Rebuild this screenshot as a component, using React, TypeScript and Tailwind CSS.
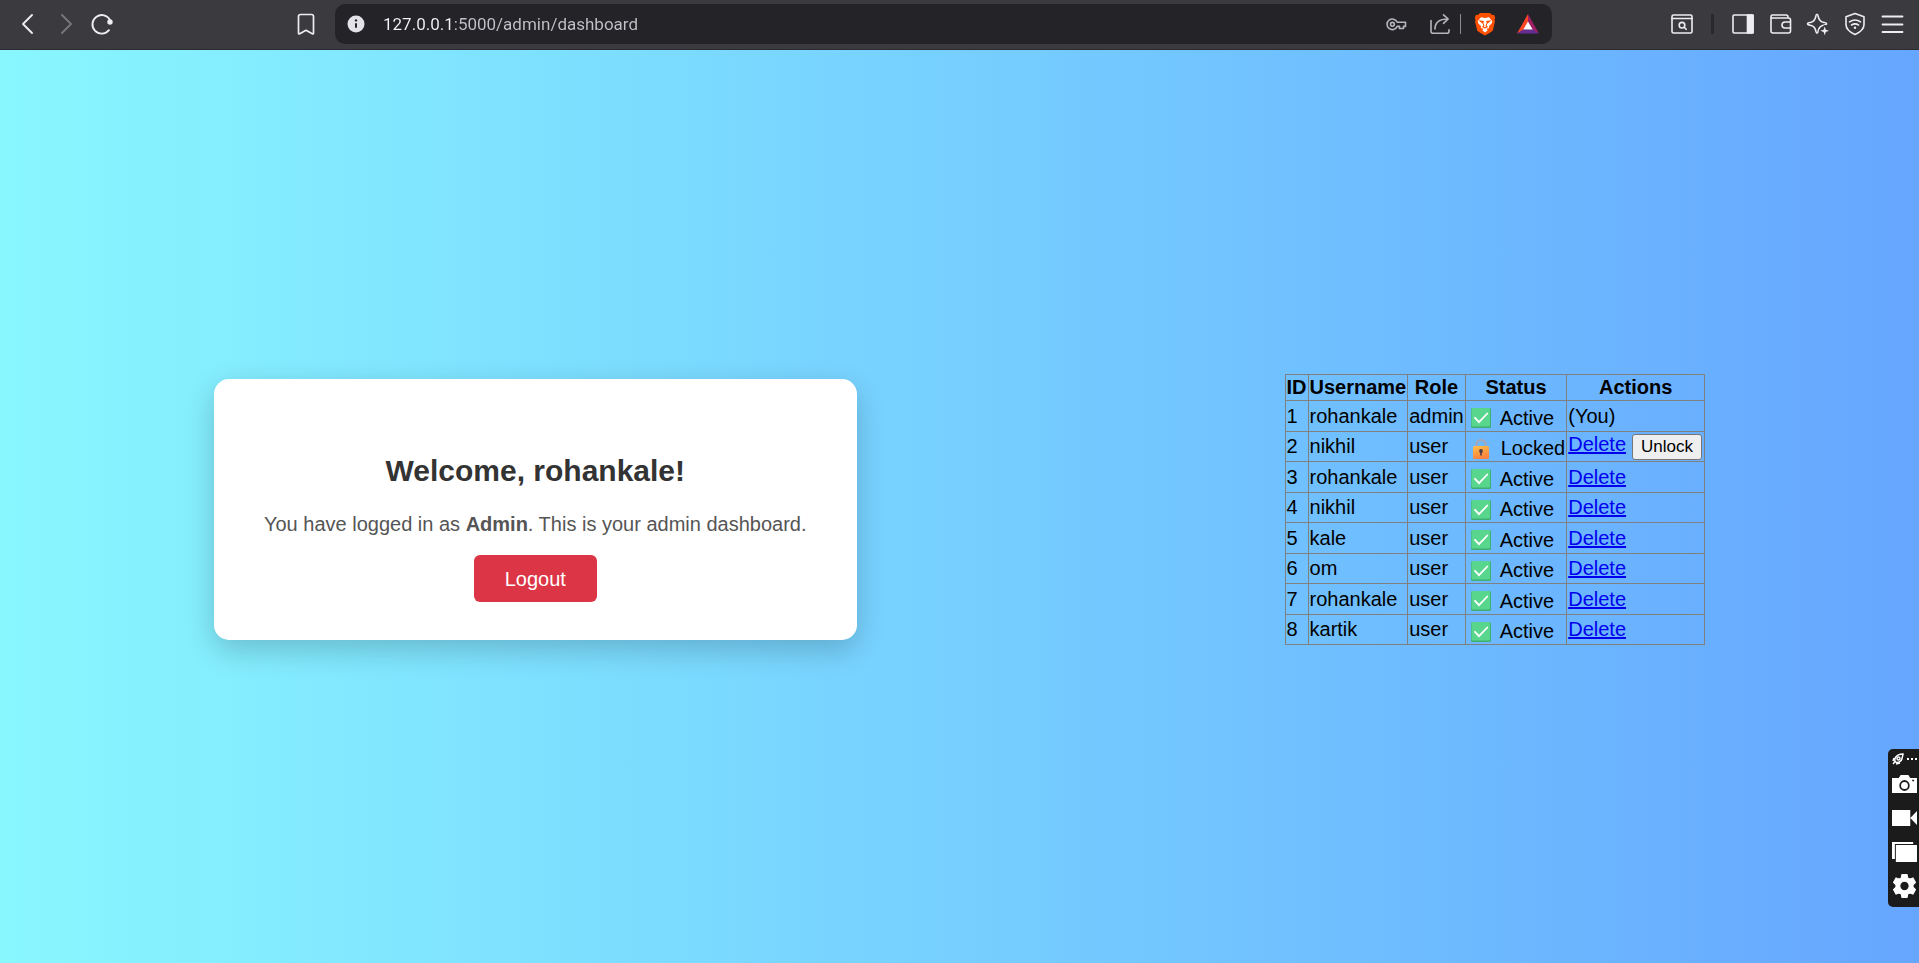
import React from "react";

type User = { id: number; name: string; role: string; locked?: boolean; self?: boolean };

const users: User[] = [
  { id: 1, name: "rohankale", role: "admin", self: true },
  { id: 2, name: "nikhil", role: "user", locked: true },
  { id: 3, name: "rohankale", role: "user" },
  { id: 4, name: "nikhil", role: "user" },
  { id: 5, name: "kale", role: "user" },
  { id: 6, name: "om", role: "user" },
  { id: 7, name: "rohankale", role: "user" },
  { id: 8, name: "kartik", role: "user" },
];

const line = {
  fill: "none",
  stroke: "currentColor",
  strokeWidth: 1.6,
  strokeLinecap: "round" as const,
  strokeLinejoin: "round" as const,
};

function IconButton({ label, className = "", children }: { label: string; className?: string; children: React.ReactNode }) {
  return (
    <button type="button" aria-label={label} className={`flex size-6 shrink-0 items-center justify-center ${className}`}>
      {children}
    </button>
  );
}

function BrowserBar() {
  return (
    <header className="flex h-[50px] shrink-0 items-center border-b border-[#2b2b2f] bg-[#3b3a3f] pb-px text-[#eeedf2]">
      <nav className="flex w-[335px] shrink-0 items-center justify-between pl-4 pr-[17px]">
        <div className="flex items-center gap-[13px]">
          <IconButton label="Back">
            <svg width="24" height="24" viewBox="0 0 24 24" {...line} strokeWidth={1.9}><path d="M16 3 7 12l9 9" /></svg>
          </IconButton>
          <IconButton label="Forward" className="text-[#77767b]">
            <svg width="24" height="24" viewBox="0 0 24 24" {...line} strokeWidth={1.9}><path d="m9 3 9 9-9 9" /></svg>
          </IconButton>
          <IconButton label="Reload">
            <svg width="24" height="24" viewBox="0 0 24 24" {...line} strokeWidth={1.9}>
              <path d="M20.1 8.2A9.3 9.3 0 1 0 19 18.2" />
              <circle cx="20" cy="10" r="2.7" fill="currentColor" stroke="none" />
            </svg>
          </IconButton>
        </div>
        <IconButton label="Bookmark">
          <svg width="24" height="24" viewBox="0 0 24 24" {...line} strokeWidth={1.7}>
            <path d="M6.500 2.500h11q2 0 2 2v16.500q0 1.300-1.200.7L12 18.300 5.700 21.700q-1.200.6-1.200-.7V4.500q0-2 2-2Z" />
          </svg>
        </IconButton>
      </nav>
      <div className="flex h-10 min-w-0 flex-1 items-center rounded-[10px] bg-[#242328] pl-[9px] pr-3">
        <IconButton label="Site information">
          <svg width="22" height="22" viewBox="0 0 22 22">
            <circle cx="11" cy="11" r="8.500" fill="#e4e2e9" />
            <path d="M11 10.200v4.500" stroke="#242328" strokeWidth="2" />
            <circle cx="11" cy="7.400" r="1.200" fill="#242328" />
          </svg>
        </IconButton>
        <input
          aria-label="Address"
          defaultValue="127.0.0.1:5000/admin/dashboard"
          className="ml-[15px] min-w-0 flex-1 bg-[linear-gradient(to_right,#f4f3f8_71px,#c3c2c8_71px)] bg-clip-text font-[Roboto,sans-serif] text-[17px] leading-6 text-transparent caret-white outline-none"
        />
        <div className="flex items-center text-[#b6b5bb]">
          <IconButton label="Passwords">
            <svg width="24" height="24" viewBox="0 0 24 24" {...line}>
              <path d="M12.200 10.200h8.300v4.200h-2v2.100h-4v-2.100h-2.300a5.300 5.300 0 1 1 0-4.200Z" />
              <circle cx="7.400" cy="12.300" r="1.900" />
            </svg>
          </IconButton>
          <IconButton label="Share" className="ml-[19px]">
            <svg width="24" height="24" viewBox="0 0 24 24" {...line}>
              <path d="M3 8.500v10.800q0 2 2 2h14q2 0 2-2v-1.500M7 17c0-6.500 4.500-10 13-10M15.500 2.800 20.200 7l-4.700 4.300" />
            </svg>
          </IconButton>
          <span className="ml-2 h-5 w-px bg-[#8b8a90]" />
          <IconButton label="Brave Shields" className="ml-3">
            <svg width="24" height="24" viewBox="0 0 24 24">
              <path d="M7 1h10l2 2 2-.2 1.200 2.600-.6 2.400.3 1.900-2.200 9Q17 21 12 23.500 7 21 4.300 18.700l-2.200-9 .3-1.900-.6-2.400L3 2.800 5 3Z" fill="#ff5000" />
              <path d="M8 5.200 12 6l4-.8 3.300 3.700-.7 2.500-2.700 2.800.3 1.700-2.300.8-.9-.8 1.700 2.300L12 20.500l-2.700-2.300 1.700-2.300-.9.800-2.300-.8.300-1.700-2.700-2.800-.7-2.500Z" fill="#fff" />
              <path d="m7.200 9 3.100.5-.6 1.600ZM16.800 9l-3.100.5.6 1.600ZM10.300 11.500l.5 2.300-1 1 2.200 1 2.200-1-1-1 .5-2.300" fill="none" stroke="#ff5000" strokeWidth="1.100" />
            </svg>
          </IconButton>
          <IconButton label="Brave Rewards" className="ml-[19px]">
            <svg width="24" height="24" viewBox="0 0 24 24">
              <path d="M12 2 1 21.500l6.500-3.500L12 10Z" fill="#ff4724" />
              <path d="m12 2 11 19.500-6.500-3.500L12 10Z" fill="#9e1f63" />
              <path d="M1 21.500h22l-6.500-4.300h-9Z" fill="#662d91" />
              <path d="m12 9.500-4.700 8h9.400Z" fill="#fff" />
            </svg>
          </IconButton>
        </div>
      </div>
      <div className="flex w-[367px] shrink-0 items-center justify-end pr-[15px]">
        <IconButton label="Search tabs">
          <svg width="24" height="24" viewBox="0 0 24 24" {...line}>
            <rect x="2" y="3" width="20" height="18" rx="1.500" /><path d="M2 6.500h20" />
            <circle cx="12" cy="13.200" r="2.800" /><path d="m14.200 15.300 2 2" />
          </svg>
        </IconButton>
        <span className="ml-[17px] h-5 w-[3px] bg-[#29282d]" />
        <IconButton label="Side panel" className="ml-[17px]">
          <svg width="24" height="24" viewBox="0 0 24 24" {...line}>
            <rect x="2" y="3" width="20" height="18" rx="1.200" /><path d="M16.500 3H22v18h-5.500Z" fill="currentColor" />
          </svg>
        </IconButton>
        <IconButton label="Wallet" className="ml-[14px]">
          <svg width="24" height="24" viewBox="0 0 24 24" {...line}>
            <path d="M2 5v14q0 2 2 2h15.500q2 0 2-2V8q0-2-2-2H3.500Q2 6 2 4.500T3.500 3H17q2 0 2 2v1M21.800 10H16q-3 0-3 3v0q0 3 3 3h5.800" />
          </svg>
        </IconButton>
        <IconButton label="Leo AI" className="ml-[13px]">
          <svg width="24" height="24" viewBox="0 0 24 24" {...line}>
            <path d="M11 2.300c1 0 1 1 1.300 2.500C13 8.300 14.500 9.700 18 10.500c1.600.3 2.600.4 2.600 1.300S19 13 17.500 13.300c-3 .7-4.500 2-5.200 5.200-.3 1.600-.4 2.600-1.300 2.600s-1-1-1.300-2.600c-.7-3.500-2-4.500-5.500-5.200-1.600-.3-2.700-.6-2.700-1.500s1.100-1 2.700-1.300C7.700 9.700 9 8.300 9.700 4.800 10 3.300 10 2.300 11 2.300Z" />
            <path d="m18.700 14.500 1.100 3.200 3.200 1.100-3.200 1.100-1.100 3.300-1.100-3.300-3.300-1.100 3.300-1.100Z" fill="currentColor" stroke="#3b3a3f" strokeWidth="3" paintOrder="stroke" />
          </svg>
        </IconButton>
        <IconButton label="VPN" className="ml-[13px]">
          <svg width="24" height="24" viewBox="0 0 24 24" {...line}>
            <path d="m12 1.500 9 3.200v7.800c0 4.500-4.500 8-9 10-4.500-2-9-5.500-9-10V4.700Z" />
            <path d="M6.500 9.800Q12 6.200 17.500 9.800M8.500 13q3.500-2.300 7 0" />
            <circle cx="12" cy="15.800" r="1.200" fill="currentColor" stroke="none" />
          </svg>
        </IconButton>
        <IconButton label="Menu" className="ml-[13px]">
          <svg width="24" height="24" viewBox="0 0 24 24" {...line} strokeWidth={1.8}><path d="M2.500 4.500h20M2.500 12.500h20M2.500 20h20" /></svg>
        </IconButton>
      </div>
    </header>
  );
}

function CheckMark() {
  return (
    <svg className="mt-1 shrink-0" width="20" height="20" viewBox="0 0 20 20" role="img" aria-label="Active account">
      <rect width="20" height="20" rx="1.500" fill="#3fae70" />
      <rect x="0.500" y="0" width="18.500" height="18.500" rx="1" fill="#59d68d" />
      <path d="m4 9.800 4 4.400L16.300 5.500" fill="none" stroke="#fff" strokeWidth="1.800" strokeLinecap="round" />
    </svg>
  );
}

function Padlock() {
  return (
    <svg className="mt-1 shrink-0" width="20" height="20" viewBox="0 0 20 20" role="img" aria-label="Locked account">
      <defs>
        <linearGradient id="padlock-body" x1="0" y1="0" x2="0.300" y2="1">
          <stop stopColor="#ffc04a" /><stop offset="1" stopColor="#f9823f" />
        </linearGradient>
      </defs>
      <path d="M5.500 9V5.500a4.500 4.500 0 0 1 9 0V9" fill="none" stroke="#a9a5b5" strokeWidth="2" />
      <rect x="2" y="7" width="16" height="13" rx="1.500" fill="url(#padlock-body)" />
      <circle cx="10" cy="12" r="1.900" fill="#4a3a45" />
      <path d="M9.200 12h1.600v4.500H9.200Z" fill="#4a3a45" />
    </svg>
  );
}

function UsersTable() {
  const cell = "border border-[#808080] px-px py-px text-left";
  const head = "border border-[#808080] px-px py-px text-center font-bold";
  return (
    <table className="border-collapse text-[20px] leading-[23px] text-black">
      <thead>
        <tr className="h-[26px]">
          <th className={head}>ID</th>
          <th className={head}>Username</th>
          <th className={head}>Role</th>
          <th className={head}>Status</th>
          <th className={head}>Actions</th>
        </tr>
      </thead>
      <tbody>
        {users.map((u) => (
          <tr key={u.id} className="odd:h-[31px] even:h-[30px]">
            <td className={cell}>{u.id}</td>
            <td className={cell}>{u.name}</td>
            <td className={cell}>{u.role}</td>
            <td className={cell}>
              <div className="flex h-[26px] items-center pl-1">
                {u.locked ? <Padlock /> : <CheckMark />}
                <span className={u.locked ? "ml-[10px] mt-1" : "ml-[9px] mt-1"}>{u.locked ? "Locked" : "Active"}</span>
              </div>
            </td>
            <td className={cell}>
              {u.self ? (
                "(You)"
              ) : u.locked ? (
                <div className="flex h-[26px] items-center pr-px">
                  <a href="#delete" className="-mt-1 text-[#0000ee] underline">Delete</a>
                  <button type="button" className="ml-[6px] h-[26px] rounded-[3px] border border-[#767676] bg-[#efefef] px-2 text-[17px] leading-5">
                    Unlock
                  </button>
                </div>
              ) : (
                <a href="#delete" className="text-[#0000ee] underline">Delete</a>
              )}
            </td>
          </tr>
        ))}
      </tbody>
    </table>
  );
}

function CaptureToolbar() {
  return (
    <aside aria-label="Screen capture" className="absolute right-0 top-[749px] flex w-[31px] flex-col items-start rounded-l-[5px] bg-[#1b1b1b] pb-2 pl-1 text-white">
      <div className="flex h-5 items-center gap-[3px]">
        <svg width="12" height="12" viewBox="0 0 12 12" fill="none" stroke="currentColor" strokeWidth="1.500">
          <path d="M1 11 3 8.500M11 1C8 1 5 2 3.500 4.500S3 9.500 5 9.500 9.500 8 10 5.500 11 2 11 1ZM2 5 1 8M8 10l-4 1" /><circle cx="6.500" cy="5.500" r="1.500" />
        </svg>
        <svg width="10" height="4" viewBox="0 0 10 4" fill="currentColor"><path d="M0 1h2v2H0ZM4 1h2v2H4ZM8 1h2v2H8Z" /></svg>
      </div>
      <button type="button" aria-label="Take screenshot" className="mt-[5px]">
        <svg width="25" height="20" viewBox="0 0 26 20" preserveAspectRatio="none">
          <path d="M0 4h7l2-3h8l2 3h7v15H0Z" fill="currentColor" />
          <circle cx="13" cy="11.500" r="4.500" fill="none" stroke="#1b1b1b" strokeWidth="1.800" />
          <path d="M21 6.500h2" stroke="#1b1b1b" strokeWidth="1.500" />
        </svg>
      </button>
      <button type="button" aria-label="Record video" className="mt-[14px]">
        <svg width="25" height="20" viewBox="0 0 26 20" preserveAspectRatio="none" fill="currentColor"><path d="M0 2h19v16H0ZM19 10l7-7v14Z" /></svg>
      </button>
      <button type="button" aria-label="Gallery" className="mt-[13px]">
        <svg width="25" height="22" viewBox="0 0 26 22" preserveAspectRatio="none" fill="currentColor"><path d="M0 1h22v2H3v15H0Z" /><path d="M4 4h22v17H4Z" /></svg>
      </button>
      <button type="button" aria-label="Settings" className="mt-[10px]">
        <svg width="25" height="26" viewBox="0 0 24 24" fill="currentColor">
          <path fillRule="evenodd" stroke="currentColor" strokeLinejoin="round" d="m9.500 1-.6 3.200-2 1.100-3-1.100-2.500 4.400L3.800 10.800v2.400l-2.400 2.200 2.500 4.400 3-1.100 2 1.100.6 3.200h5l.6-3.200 2-1.100 3 1.100 2.500-4.400-2.400-2.200v-2.400l2.400-2.200-2.500-4.400-3 1.100-2-1.100L14.500 1ZM12 7.500a4.500 4.500 0 1 1 0 9 4.500 4.500 0 0 1 0-9Z" />
        </svg>
      </button>
    </aside>
  );
}

export default function App() {
  return (
    <div className="relative flex min-h-screen flex-col font-['Liberation_Sans',Arial,sans-serif]">
      <BrowserBar />
      <main className="flex flex-1 items-center justify-around bg-linear-to-r from-[#89f7fe] to-[#66a6ff] pt-[6px]">
        <section className="rounded-[15px] bg-white px-[50px] pb-[38px] pt-[74px] text-center shadow-[0_10px_30px_rgba(0,0,0,0.2)]">
          <h1 className="text-[30px] font-bold leading-[35px] text-[#333333]">Welcome, rohankale!</h1>
          <p className="mt-6 text-[20px] leading-6 text-[#555555]">
            You have logged in as <strong>Admin</strong>. This is your admin dashboard.
          </p>
          <button type="button" className="mt-[19px] h-[47px] rounded-[6px] bg-[#dc3545] px-[31px] text-[20px] text-white">
            Logout
          </button>
        </section>
        <UsersTable />
      </main>
      <CaptureToolbar />
    </div>
  );
}
